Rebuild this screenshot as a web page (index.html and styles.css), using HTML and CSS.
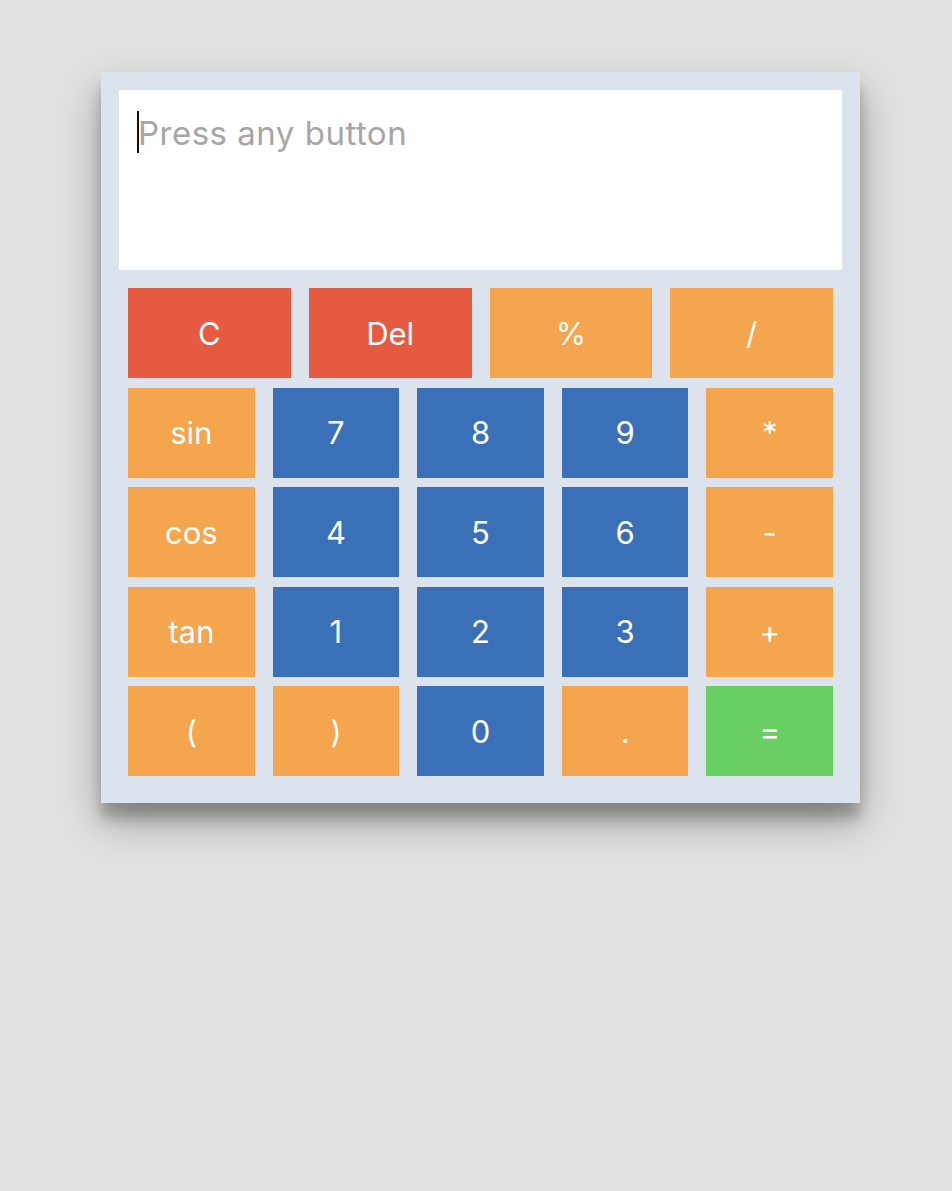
FILE: index.html
```html
<!DOCTYPE html>
<html lang="en">
<head>
<meta charset="utf-8">
<title>Calculator</title>
<link rel="stylesheet" href="styles.css">
</head>
<body>
<div class="calc">
  <div class="screen">
    <textarea class="display" placeholder="Press any button" readonly></textarea>
    <span class="caret"></span>
  </div>
  <div class="keys">
    <div class="row row-4">
      <button class="key red">C</button>
      <button class="key red">Del</button>
      <button class="key orange">%</button>
      <button class="key orange">/</button>
    </div>
    <div class="row row-5">
      <button class="key orange">sin</button>
      <button class="key blue">7</button>
      <button class="key blue">8</button>
      <button class="key blue">9</button>
      <button class="key orange">*</button>
    </div>
    <div class="row row-5">
      <button class="key orange">cos</button>
      <button class="key blue">4</button>
      <button class="key blue">5</button>
      <button class="key blue">6</button>
      <button class="key orange">-</button>
    </div>
    <div class="row row-5">
      <button class="key orange">tan</button>
      <button class="key blue">1</button>
      <button class="key blue">2</button>
      <button class="key blue">3</button>
      <button class="key orange">+</button>
    </div>
    <div class="row row-5">
      <button class="key orange">(</button>
      <button class="key orange">)</button>
      <button class="key blue">0</button>
      <button class="key orange">.</button>
      <button class="key green">=</button>
    </div>
  </div>
</div>
</body>
</html>
```

FILE: styles.css
```css
html, body {
  margin: 0;
  padding: 0;
}
body {
  background: #e2e1e0;
  font-family: Inter, "Liberation Sans", sans-serif;
  min-height: 1191px;
}
.calc {
  box-sizing: border-box;
  width: 759px;
  margin: 72px 0 0 101px;
  padding: 18px;
  background: #dde3ec;
  box-shadow: 0 19px 38px rgba(0, 0, 0, 0.30), 0 15px 12px rgba(0, 0, 0, 0.22);
}
.screen {
  position: relative;
}
.display {
  display: block;
  box-sizing: border-box;
  width: 100%;
  height: 180px;
  margin: 0;
  border: none;
  outline: none;
  resize: none;
  background: #ffffff;
  padding: 23px 18px 0 19px;
  font-family: Inter, "Liberation Sans", sans-serif;
  font-size: 33px;
  letter-spacing: 0.5px;
  line-height: 40px;
  color: #333;
}
.display::placeholder {
  color: #a6a6a6;
  opacity: 1;
}
.caret {
  position: absolute;
  left: 18px;
  top: 21px;
  width: 2px;
  height: 42px;
  background: #111;
}
.keys {
  display: flex;
  flex-direction: column;
  gap: 9.5px;
  padding: 18px 9px 9px;
}
.row {
  display: grid;
  column-gap: 18px;
}
.row-4 {
  grid-template-columns: repeat(4, 1fr);
}
.row-5 {
  grid-template-columns: repeat(5, 1fr);
}
.key {
  height: 90px;
  border: none;
  margin: 0;
  padding: 0;
  color: #ffffff;
  font-family: Inter, "Liberation Sans", sans-serif;
  font-size: 31px;
  font-weight: 400;
  display: flex;
  align-items: center;
  justify-content: center;
  cursor: pointer;
}
.red { background: #e55a41; }
.orange { background: #f4a54d; }
.blue { background: #3a70b8; }
.green { background: #69cf63; }
```
